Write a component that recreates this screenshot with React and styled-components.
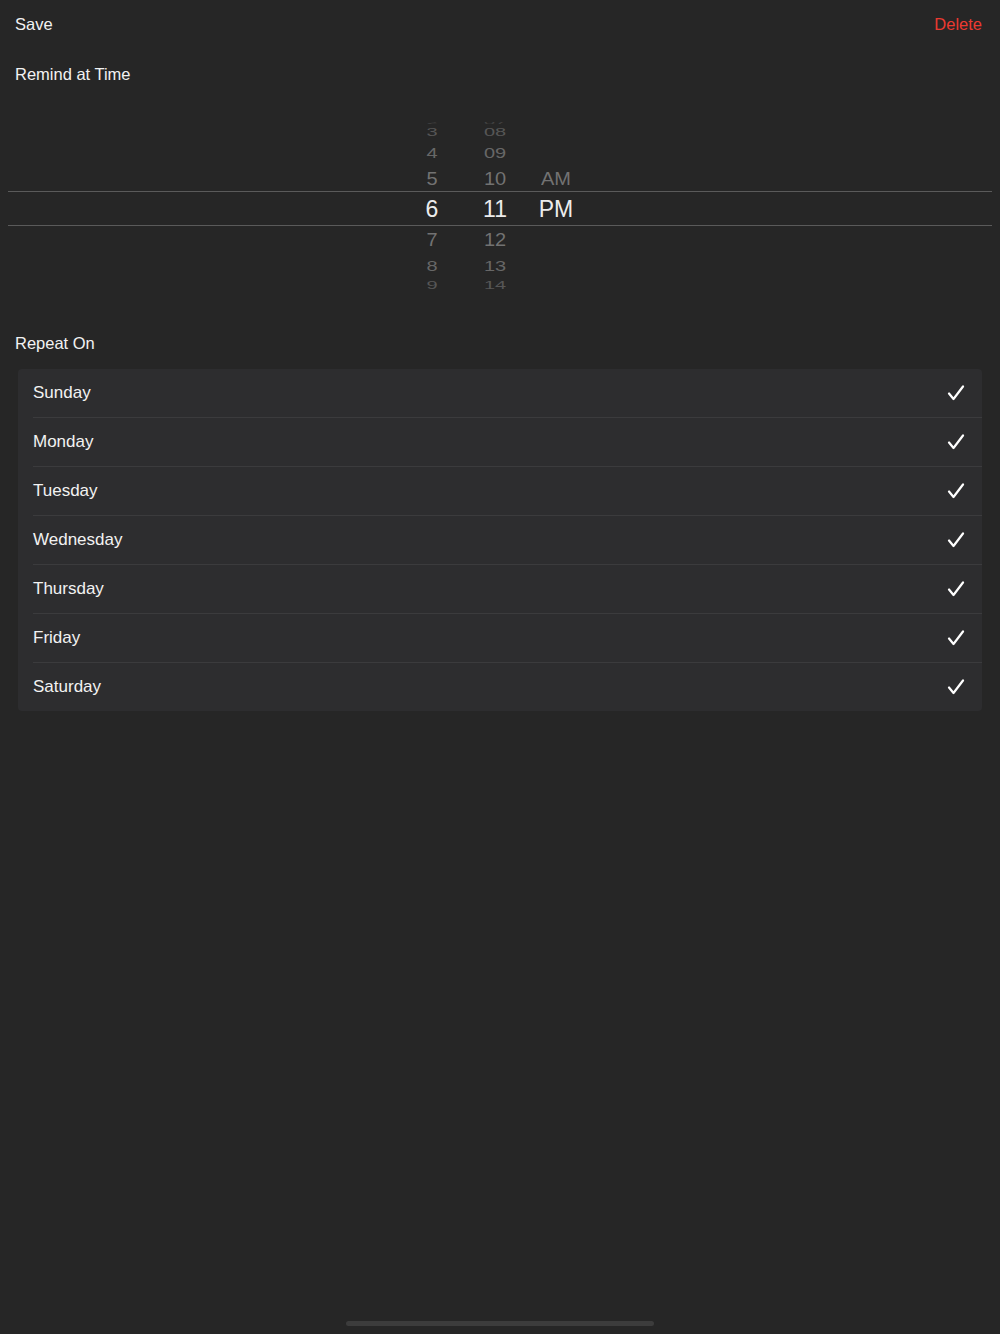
import React from 'react';
import styled, { createGlobalStyle } from 'styled-components';

const GlobalStyle = createGlobalStyle`
    html, body {
        margin: 0;
        padding: 0;
        background: #262626;
    }
    body {
        font-family: "Liberation Sans", Arial, sans-serif;
        color: #f2f2f2;
        -webkit-font-smoothing: antialiased;
    }
`;

const Screen = styled.div`
    min-height: 1334px;
    display: flex;
    flex-direction: column;
    position: relative;
`;

const TopBar = styled.div`
    height: 48px;
    display: flex;
    align-items: center;
    justify-content: space-between;
    padding: 0 18px 0 15px;
`;

const BarButton = styled.span`
    font-size: 16.5px;
    color: ${props => props.danger ? '#eb3a31' : '#f2f2f2'};
`;

const SectionLabel = styled.div`
    font-size: 16.5px;
    line-height: 20px;
    padding-left: 15px;
    margin-top: ${props => props.top}px;
`;

const Picker = styled.div`
    position: relative;
    height: 172px;
    margin: 38px 8px 0;
    display: flex;
    justify-content: center;
    padding-right: 14px;
    overflow: hidden;
`;

const SelectionBand = styled.div`
    position: absolute;
    left: 0;
    right: 0;
    top: 69px;
    height: 33px;
    border-top: 1px solid #5a5a5a;
    border-bottom: 1px solid #5a5a5a;
    pointer-events: none;
`;

const Wheel = styled.div`
    position: relative;
    width: ${props => props.width}px;
    height: 100%;
`;

const WheelItem = styled.div`
    position: absolute;
    left: 0;
    right: 0;
    top: 87px;
    height: 30px;
    margin-top: -15px;
    display: flex;
    align-items: center;
    justify-content: center;
    font-size: ${props => props.selected ? 23 : 20}px;
    color: ${props => props.selected ? '#ececec' : '#767676'};
`;

const Card = styled.div`
    margin: 16px 18px 0;
    background: #2d2d2f;
    border-radius: 4px;
`;

const Row = styled.div`
    height: ${props => props.last ? 48 : 49}px;
    display: flex;
    align-items: stretch;
    padding-left: 15px;
    box-sizing: border-box;
`;

const RowInner = styled.div`
    flex: 1;
    display: flex;
    align-items: center;
    justify-content: space-between;
    padding-right: 17px;
    border-bottom: ${props => props.last ? 'none' : '1px solid #3b3b3d'};
`;

const DayName = styled.span`
    font-size: 17px;
`;

const HomeIndicator = styled.div`
    position: absolute;
    left: 346px;
    bottom: 8px;
    width: 308px;
    height: 5px;
    border-radius: 3px;
    background: #3c3c3c;
`;

const RADIUS = 88;
const STEP = 20;

const hours = [2, 3, 4, 5, 6, 7, 8, 9, 10].map(String);
const minutes = ['07', '08', '09', '10', '11', '12', '13', '14', '15'];
const meridiem = ['', '', '', 'AM', 'PM', '', '', '', ''];

const days = ['Sunday', 'Monday', 'Tuesday', 'Wednesday', 'Thursday', 'Friday', 'Saturday'];

const Check = () => (
    <svg width="18" height="16" viewBox="0 0 18 16" fill="none">
        <path d="M2 8.5 L6.5 14 L16 1.5" stroke="#ffffff" strokeWidth="2.2" strokeLinecap="round" strokeLinejoin="round" />
    </svg>
);

const WheelColumn = ({ items, width }) => (
    <Wheel width={width}>
        {items.map((label, i) => {
            const k = i - 4;
            const angle = (k * STEP * Math.PI) / 180;
            if (!label || Math.abs(k * STEP) >= 90) return null;
            const y = RADIUS * Math.sin(angle);
            const scale = Math.cos(angle);
            return (
                <WheelItem
                    key={i}
                    selected={k === 0}
                    style={{
                        transform: `translateY(${y}px) scaleY(${scale})`,
                        opacity: k === 0 ? 1 : 0.2 + 0.8 * scale,
                    }}
                >
                    {label}
                </WheelItem>
            );
        })}
    </Wheel>
);

const App = () => {
    return (
        <Screen>
            <GlobalStyle />
            <TopBar>
                <BarButton>Save</BarButton>
                <BarButton danger>Delete</BarButton>
            </TopBar>
            <SectionLabel top={16}>Remind at Time</SectionLabel>
            <Picker>
                <SelectionBand />
                <WheelColumn items={hours} width={60} />
                <WheelColumn items={minutes} width={66} />
                <WheelColumn items={meridiem} width={56} />
            </Picker>
            <SectionLabel top={39}>Repeat On</SectionLabel>
            <Card>
                {days.map((day, i) => {
                    const last = i === days.length - 1;
                    return (
                        <Row key={day} last={last}>
                            <RowInner last={last}>
                                <DayName>{day}</DayName>
                                <Check />
                            </RowInner>
                        </Row>
                    );
                })}
            </Card>
            <HomeIndicator />
        </Screen>
    );
};

export default App;
